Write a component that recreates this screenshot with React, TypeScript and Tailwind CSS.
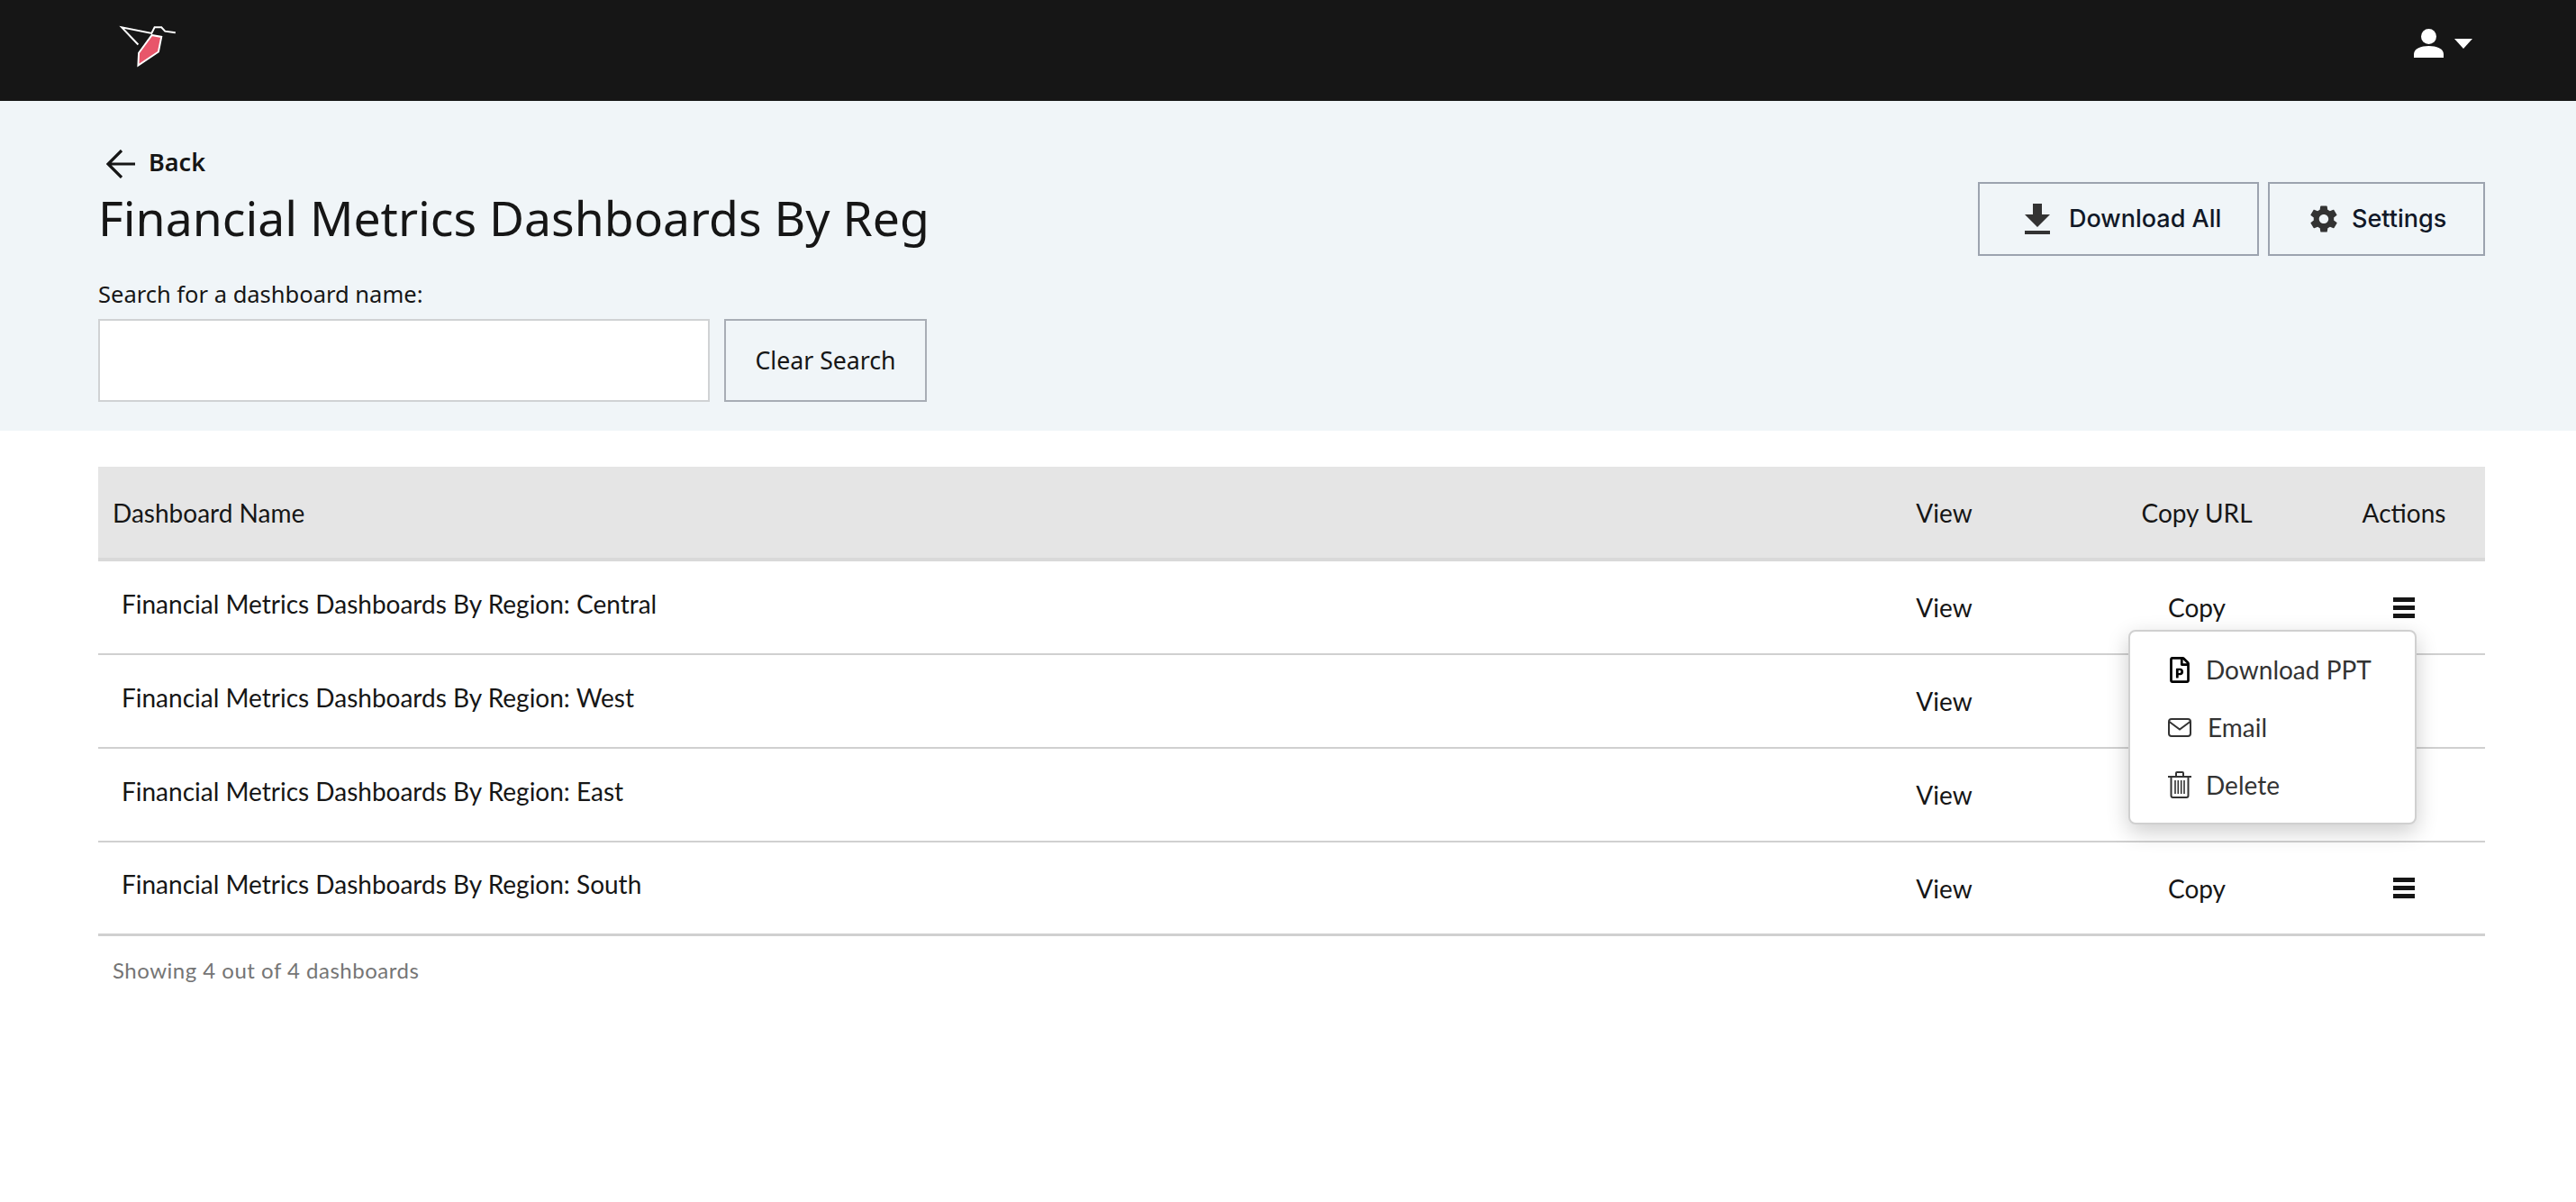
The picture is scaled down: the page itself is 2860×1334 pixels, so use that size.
import React from "react";
import { FaRegFilePowerpoint } from "react-icons/fa";
import { IoMdSettings } from "react-icons/io";

const regions = ["Central", "West", "East", "South"];

const Logo = () => (
  <svg width="65" height="48" viewBox="96 50 195 145" fill="none">
    <path
      d="M160 118L105 60L205 80L215 60H238L250 73L285 78"
      stroke="#fff"
      strokeWidth="6"
    />
    <path d="M206 86L238 92L228 142L160 188L162 146Z" fill="#E8566A" stroke="#fff" strokeWidth="6" />
  </svg>
);

const Envelope = () => (
  <svg width="26" height="21" viewBox="0 0 26 21" fill="none" stroke="#333" strokeWidth="2">
    <rect x="1" y="1" width="24" height="19" rx="3" />
    <path d="M1.5 4L13 12.5L24.5 4" />
  </svg>
);

const Trash = () => (
  <svg width="26" height="30" viewBox="0 0 26 30" fill="none" stroke="#333" strokeWidth="2">
    <path d="M0 6h26M9 6V2a1 1 0 0 1 1-1h6a1 1 0 0 1 1 1v4" />
    <path d="M3.5 6v21a2 2 0 0 0 2 2h15a2 2 0 0 0 2-2V6" />
    <path d="M8 10v15M11.3 10v15M14.7 10v15M18 10v15" strokeWidth="1.6" />
  </svg>
);

const Bars = () => (
  <div className="flex flex-col gap-[4px] w-[24px]">
    <div className="h-[5px] bg-[#161616]" />
    <div className="h-[5px] bg-[#161616]" />
    <div className="h-[5px] bg-[#161616]" />
  </div>
);

const Menu = () => (
  <div className="absolute left-[2254px] top-[181px] z-10 w-[320px] h-[216px] bg-white border-2 border-[#d0d0d0] rounded-[8px] shadow-[0_8px_24px_rgba(0,0,0,0.2)] text-[#333] text-[28px]">
    <div className="flex items-center h-[64px] mt-[10px] pl-[44px]">
      <FaRegFilePowerpoint className="w-[22px] h-[29px] text-black" />
      <span className="ml-[18px]">Download PPT</span>
    </div>
    <div className="flex items-center h-[64px] pl-[42px]">
      <Envelope />
      <span className="ml-[18px]">Email</span>
    </div>
    <div className="flex items-center h-[64px] pl-[42px]">
      <Trash />
      <span className="ml-[16px]">Delete</span>
    </div>
  </div>
);

export default function App() {
  return (
    <div className="min-h-[1334px] bg-white text-[#161616] font-['Lato',sans-serif] text-[28px]">
      <div className="h-[112px] bg-[#161616] flex justify-between pl-[132px] pr-[115px]">
        <div className="pt-[27px]">
          <Logo />
        </div>
        <div className="flex items-start pt-[32px] gap-[12px]">
          <svg width="33" height="32" viewBox="0 0 33 32" fill="#fff">
            <circle cx="16.5" cy="8.5" r="8.5" />
            <path d="M0 32v-4c0-6 8-9 16.5-9S33 22 33 28v4z" />
          </svg>
          <div className="mt-[11px] border-x-[10px] border-x-transparent border-t-[11px] border-t-white" />
        </div>
      </div>

      <div className="h-[366px] bg-[#f0f5f8] pl-[109px] pr-[101px] flex justify-between">
        <div className="w-[921px] pt-[48px] font-['Noto_Sans',sans-serif]">
          <div className="flex items-center h-[44px] gap-[14px] pl-[9px]">
            <svg width="33" height="32" viewBox="0 0 33 32" fill="none" stroke="#161616" strokeWidth="3.2">
              <path d="M32 16H3M17 1L2 16l15 15" />
            </svg>
            <span className="font-semibold text-[27px] -mt-[3px]">Back</span>
          </div>
          <div className="mt-[2px] h-[72px] overflow-hidden whitespace-nowrap text-[53.5px] leading-[72px]">
            Financial Metrics Dashboards By Region
          </div>
          <div className="mt-[28px] h-[40px] leading-[40px] text-[25.5px]">Search for a dashboard name:</div>
          <div className="mt-[8px] flex gap-[16px]">
            <input className="w-[679px] h-[92px] bg-white border-2 border-[#d0d2d4]" />
            <button className="w-[225px] h-[92px] border-2 border-[#a8adb5] text-[26.7px] leading-none">
              Clear Search
            </button>
          </div>
        </div>
        <div className="flex gap-[10px] pt-[90px] font-['Inter',sans-serif] font-medium text-[#111827] text-[27px]">
          <button className="w-[312px] h-[82px] border-2 border-[#9ca3af] flex items-center pl-[50px] gap-[21px]">
            <svg width="28" height="34" viewBox="0 0 28 34" fill="#333">
              <path d="M9 0h10v12h9L14 26 0 12h9z" />
              <path d="M0 30h28v4H0z" />
            </svg>
            Download All
          </button>
          <button className="w-[241px] h-[82px] border-2 border-[#9ca3af] flex items-center pl-[42px] gap-[13px]">
            <IoMdSettings className="w-[36px] h-[36px] text-[#333]" />
            Settings
          </button>
        </div>
      </div>

      <div className="relative ml-[109px] mr-[101px] mt-[40px]">
        <div className="grid grid-cols-[1fr_281px_280px_180px] items-center h-[105px] bg-[#e5e5e5] border-b-[4px] border-[#d9d9d9]">
          <div className="pl-[16px]">Dashboard Name</div>
          <div className="text-center">View</div>
          <div className="text-center">Copy URL</div>
          <div className="text-center">Actions</div>
        </div>
        {regions.map((r, i) => (
          <div
            key={r}
            className={`grid grid-cols-[1fr_281px_280px_180px] items-center h-[104px] border-[#d0d0d0] ${
              i === 3 ? "border-b-[3px]" : "border-b-2"
            }`}
          >
            <div className="pl-[26px] pb-[9px]">Financial Metrics Dashboards By Region: {r}</div>
            <div className="text-center">View</div>
            <div className="text-center">Copy</div>
            <div className="flex justify-center">
              <Bars />
            </div>
          </div>
        ))}
        <Menu />
        <div className="pl-[16px] pt-[20px] text-[24px] tracking-[0.5px] text-[#757575]">
          Showing 4 out of 4 dashboards
        </div>
      </div>
    </div>
  );
}
